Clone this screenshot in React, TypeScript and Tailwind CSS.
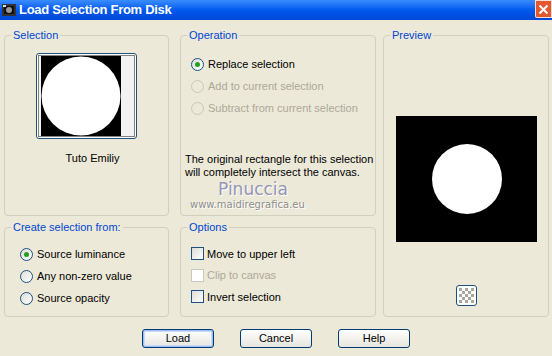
const ui = { fontFamily: '"Liberation Sans", Arial, sans-serif' };

function Group({ label, className, children }: { label: string; className?: string; children?: React.ReactNode }) {
  return (
    <div className={`relative rounded-[4px] border border-[#D0D0BF] ${className ?? ""}`}>
      <span className="absolute -top-[8px] left-[6px] bg-[#ECE9D8] px-[2px] text-[11px] leading-[14px] text-[#0046D5]">
        {label}
      </span>
      {children}
    </div>
  );
}

function Radio({ label, checked, disabled }: { label: string; checked?: boolean; disabled?: boolean }) {
  return (
    <div className="flex h-[22px] items-center gap-[4px]">
      <span
        className={`flex h-[13px] w-[13px] items-center justify-center rounded-full border ${
          disabled ? "border-[#CAC8BB] bg-transparent" : "border-[#1C5180] bg-gradient-to-br from-[#DCDCD7] to-white"
        }`}
      >
        {checked && <span className="h-[5px] w-[5px] rounded-full bg-[#21A121]" />}
      </span>
      <span className={`text-[11px] ${disabled ? "text-[#ACA899]" : "text-black"}`}>{label}</span>
    </div>
  );
}

function Check({ label, disabled }: { label: string; disabled?: boolean }) {
  return (
    <div className="flex h-[21.5px] items-center gap-[3px]">
      <span
        className={`h-[13px] w-[13px] border ${
          disabled ? "border-[#CAC8BB] bg-white" : "border-[#1C5180] bg-gradient-to-br from-[#DCDCD7] to-white"
        }`}
      />
      <span className={`text-[11px] ${disabled ? "text-[#ACA899]" : "text-black"}`}>{label}</span>
    </div>
  );
}

function Btn({ label, focus }: { label: string; focus?: boolean }) {
  return (
    <div
      className={`flex h-[19px] w-[72px] items-center justify-center rounded-[3px] border border-[#003C74] bg-gradient-to-b from-white to-[#E6E5DE] text-[11px] text-black ${
        focus ? "shadow-[inset_0_0_0_1px_#9DBDF6,inset_0_0_0_2px_#C9DBFB]" : ""
      }`}
    >
      {label}
    </div>
  );
}

export default function App() {
  return (
    <div className="h-[356px] w-[552px] overflow-hidden bg-[#ECE9D8]" style={ui}>
      {/* title bar */}
      <div className="flex h-[20px] items-center bg-gradient-to-b from-[#3A8CFF] via-[#0058EE] to-[#0048D8] pl-[2px]">
        <svg width="14" height="14" viewBox="0 0 14 14">
          <rect x="0" y="1" width="14" height="12" fill="#333" />
          <rect x="2" y="3" width="10" height="8" fill="#111" />
          <circle cx="7" cy="7" r="3" fill="#999" />
          <rect x="1" y="2" width="3" height="2" fill="#ddd" />
        </svg>
        <span className="ml-[3px] text-[13px] font-bold tracking-[-0.3px] text-white">Load Selection From Disk</span>
        <div className="ml-auto flex h-[18px] w-[17px] items-center justify-center self-start rounded-bl-[2px] border border-white/80 bg-[#E2582F]">
          <svg width="11" height="11" viewBox="0 0 11 11">
            <path d="M1.5 1.5 L9.5 9.5 M9.5 1.5 L1.5 9.5" stroke="white" strokeWidth="2" />
          </svg>
        </div>
      </div>

      <div className="grid grid-cols-[165px_11px_196px_7px_166px] grid-rows-[181px_90px] gap-y-[11px] pl-[4px] pt-[15px]">
        <Group label="Selection" className="col-start-1 row-start-1">
          <div className="flex flex-col items-center pt-[17px]">
            <div className="h-[86px] w-[101px] rounded-[3px] border border-[#1C5180] bg-white p-[1px]">
              <svg width="97" height="82" viewBox="0 0 97 82">
                <rect x="0" y="0" width="97" height="82" fill="white" />
                <rect x="1" y="1" width="95" height="80" fill="#F2F2F2" />
                <rect x="3" y="1" width="80" height="80" fill="black" />
                <clipPath id="thumb">
                  <rect x="3" y="1" width="80" height="80" />
                </clipPath>
                <circle cx="43" cy="41" r="39.5" fill="white" clipPath="url(#thumb)" />
                <rect x="0.5" y="0.5" width="96" height="81" fill="none" stroke="black" strokeDasharray="1 1" />
              </svg>
            </div>
            <span className="ml-[12px] mt-[11px] text-[11px] text-black">Tuto Emiliy</span>
          </div>
        </Group>

        <Group label="Operation" className="col-start-3 row-start-1">
          <div className="pl-[10px] pt-[17px]">
            <Radio label="Replace selection" checked />
            <Radio label="Add to current selection" disabled />
            <Radio label="Subtract from current selection" disabled />
          </div>
          <p className="ml-[4px] mt-[34px] text-[11px] leading-[13px] text-black">
            The original rectangle for this selection
            <br />
            will completely intersect the canvas.
          </p>
          <div
            className="ml-[37px] mt-[1px] text-[17px] leading-[18px] text-[#9595B6] [text-shadow:1px_1px_0_#fff]"
            style={{ fontFamily: '"DejaVu Sans", sans-serif' }}
          >
            Pinuccia
          </div>
          <div
            className="ml-[9px] mt-[1px] text-[10px] leading-[12px] text-[#8E8E8E] [text-shadow:1px_1px_0_#fff]"
            style={{ fontFamily: '"DejaVu Sans", sans-serif' }}
          >
            www.maidiregrafica.eu
          </div>
        </Group>

        <Group label="Preview" className="col-start-5 row-span-2 row-start-1">
          <div className="flex flex-col items-center pt-[80px]">
            <svg width="141" height="126" viewBox="0 0 141 126">
              <rect width="141" height="126" fill="black" />
              <circle cx="71" cy="63" r="35" fill="white" />
            </svg>
            <div className="mt-[43px] flex h-[21px] w-[21px] items-center justify-center rounded-[3px] border border-[#1C5180] bg-white">
              <svg width="15" height="15" viewBox="0 0 15 15">
                {[0, 1, 2, 3, 4].flatMap((r) =>
                  [0, 1, 2, 3, 4].map((c) =>
                    (r + c) % 2 === 0 ? <rect key={`${r}-${c}`} x={c * 3} y={r * 3} width="3" height="3" fill="#A9A89E" /> : null
                  )
                )}
              </svg>
            </div>
          </div>
        </Group>

        <Group label="Create selection from:" className="col-start-1 row-start-2">
          <div className="pl-[15px] pt-[15px]">
            <Radio label="Source luminance" checked />
            <Radio label="Any non-zero value" />
            <Radio label="Source opacity" />
          </div>
        </Group>

        <Group label="Options" className="col-start-3 row-start-2">
          <div className="pl-[10px] pt-[15px]">
            <Check label="Move to upper left" />
            <Check label="Clip to canvas" disabled />
            <Check label="Invert selection" />
          </div>
        </Group>
      </div>

      <div className="ml-[142px] mt-[12px] flex gap-[26px]">
        <Btn label="Load" focus />
        <Btn label="Cancel" />
        <Btn label="Help" />
      </div>
    </div>
  );
}
